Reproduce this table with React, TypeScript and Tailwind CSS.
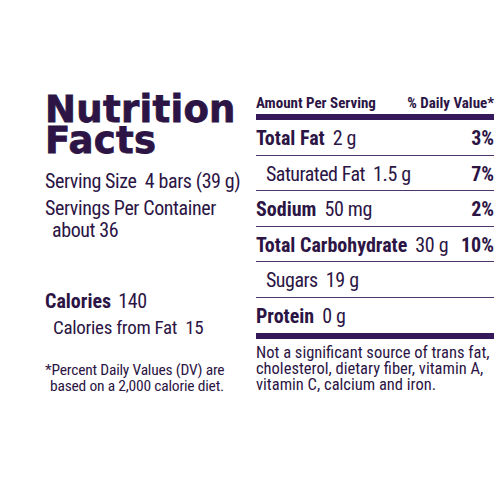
const narrow = "font-['Roboto_Condensed','Roboto',sans-serif]";

function Row({
  label,
  amount,
  dv,
  bold,
  indent,
  last,
}: {
  label: string;
  amount: string;
  dv?: string;
  bold?: boolean;
  indent?: boolean;
  last?: boolean;
}) {
  return (
    <div
      className={
        "flex h-[35.5px] items-center justify-between whitespace-nowrap pt-[2px] text-[20px] leading-none " +
        (last ? "" : "border-b-[1.5px] border-[#4a3468]")
      }
    >
      <div className={indent ? "pl-[10px]" : ""}>
        <span className={bold ? "font-bold" : "tracking-[-0.5px]"}>{label}</span>
        <span className="ml-[8px] tracking-[-0.3px]">{amount}</span>
      </div>
      {dv && <span className="font-bold">{dv}</span>}
    </div>
  );
}

export default function App() {
  return (
    <div className={"flex h-[500px] w-[500px] bg-white text-[#2c1545] " + narrow}>
      {/* left side */}
      <div className="w-[211px] shrink-0 pl-[45px] pt-[94px]">
        <h1 className="font-['DejaVu_Sans',sans-serif] text-[37px] font-bold leading-[31px] tracking-[0.3px] [-webkit-text-stroke:0.8px_#2c1545]">
          Nutrition
          <br />
          Facts
        </h1>
        <div className="mt-[13px] whitespace-nowrap text-[20px] leading-[25px] tracking-[-0.4px]">
          <p>Serving Size&nbsp; 4 bars (39 g)</p>
          <p className="mt-[2px]">Servings Per Container</p>
          <p className="pl-[7px] leading-[18px]">about 36</p>
        </div>
        <div className="mt-[49px] whitespace-nowrap text-[20px] leading-[27px] tracking-[-0.3px]">
          <p>
            <span className="font-bold tracking-normal">Calories</span>
            <span className="ml-[7px]">140</span>
          </p>
          <p className="pl-[8px] text-[19px] leading-[25px]">Calories from Fat&nbsp; 15</p>
        </div>
        <div className="mt-[22px] whitespace-nowrap text-[15.5px] leading-[16px] tracking-[-0.2px]">
          <p>*Percent Daily Values (DV) are</p>
          <p className="pl-[5px]">based on a 2,000 calorie diet.</p>
        </div>
      </div>

      {/* right side */}
      <div className="ml-[45px] w-[238px] shrink-0 pt-[95px]">
        <div className="flex justify-between whitespace-nowrap text-[15px] font-bold leading-[16px]">
          <span>Amount Per Serving</span>
          <span>% Daily Value*</span>
        </div>
        <div className="mt-[3px] h-[6px] bg-[#35195a]" />
        <Row label="Total Fat" amount="2 g" dv="3%" bold />
        <Row label="Saturated Fat" amount="1.5 g" dv="7%" indent />
        <Row label="Sodium" amount="50 mg" dv="2%" bold />
        <Row label="Total Carbohydrate" amount="30 g" dv="10%" bold />
        <Row label="Sugars" amount="19 g" indent />
        <Row label="Protein" amount="0 g" bold last />
        <div className="h-[6px] bg-[#35195a]" />
        <div className="mt-[6px] whitespace-nowrap text-[16.5px] leading-[16px]">
          <p>Not a significant source of trans fat,</p>
          <p>cholesterol, dietary fiber, vitamin A,</p>
          <p>vitamin C, calcium and iron.</p>
        </div>
      </div>
    </div>
  );
}
